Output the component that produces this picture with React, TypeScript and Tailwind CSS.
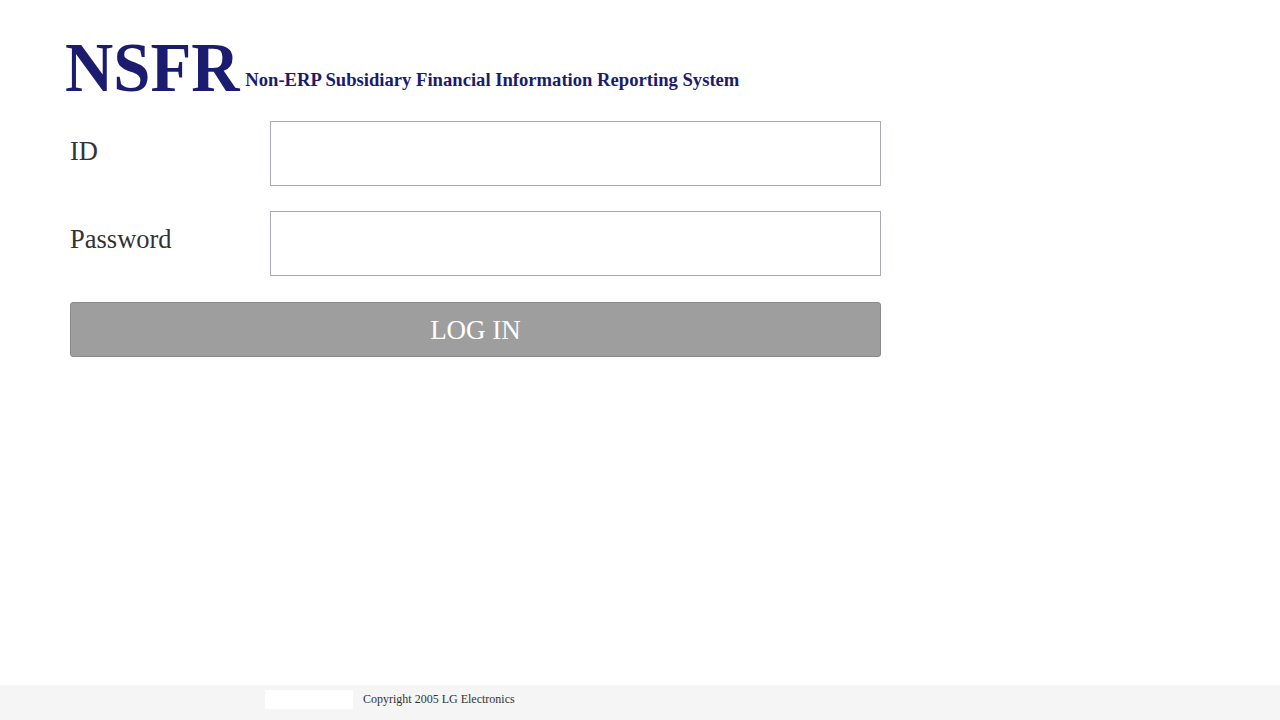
export default function App() {
  return (
    <div className="relative flex min-h-[720px] flex-col bg-white font-['Liberation_Serif',serif] text-[#333]">
      <main className="flex-1 pl-[70px] pt-[30px]">
        {/* Title */}
        <h1 className="-ml-[5px] h-[76px] origin-left scale-x-[0.955] whitespace-nowrap leading-[76px] text-[#1b1b6f]">
          <span className="text-[70px] font-bold">NSFR</span>
          <span className="ml-[6px] align-[5px] text-[19.5px] font-bold">
            Non-ERP Subsidiary Financial Information Reporting System
          </span>
        </h1>

        <form className="mt-[15px] w-[811px]" onSubmit={(e) => e.preventDefault()}>
          <div className="flex items-start">
            <label className="w-[200px] pt-[13px] text-[26.5px] leading-[34px]">ID</label>
            <input
              type="text"
              className="h-[65px] w-[611px] border border-[#a9a9bb] bg-white px-3 outline-none"
            />
          </div>
          <div className="mt-[25px] flex items-start">
            <label className="w-[200px] pt-[11px] text-[26.5px] leading-[34px]">Password</label>
            <input
              type="password"
              className="h-[65px] w-[611px] border border-[#a9a9bb] bg-white px-3 outline-none"
            />
          </div>
          <button
            type="submit"
            className="mt-[26px] h-[55px] w-full rounded-[3px] border border-[#8a8a8a] bg-[#9e9e9e] pt-[2px] text-[27px] text-white"
          >
            LOG IN
          </button>
        </form>
      </main>

      <footer className="flex h-[35px] items-start bg-[#f5f5f5] pl-[265px] pt-[5px]">
        <div className="h-[19px] w-[88px] bg-white" />
        <span className="ml-[10px] text-[12px] leading-[19px] text-[#333]">
          Copyright 2005 LG Electronics
        </span>
      </footer>
    </div>
  );
}
